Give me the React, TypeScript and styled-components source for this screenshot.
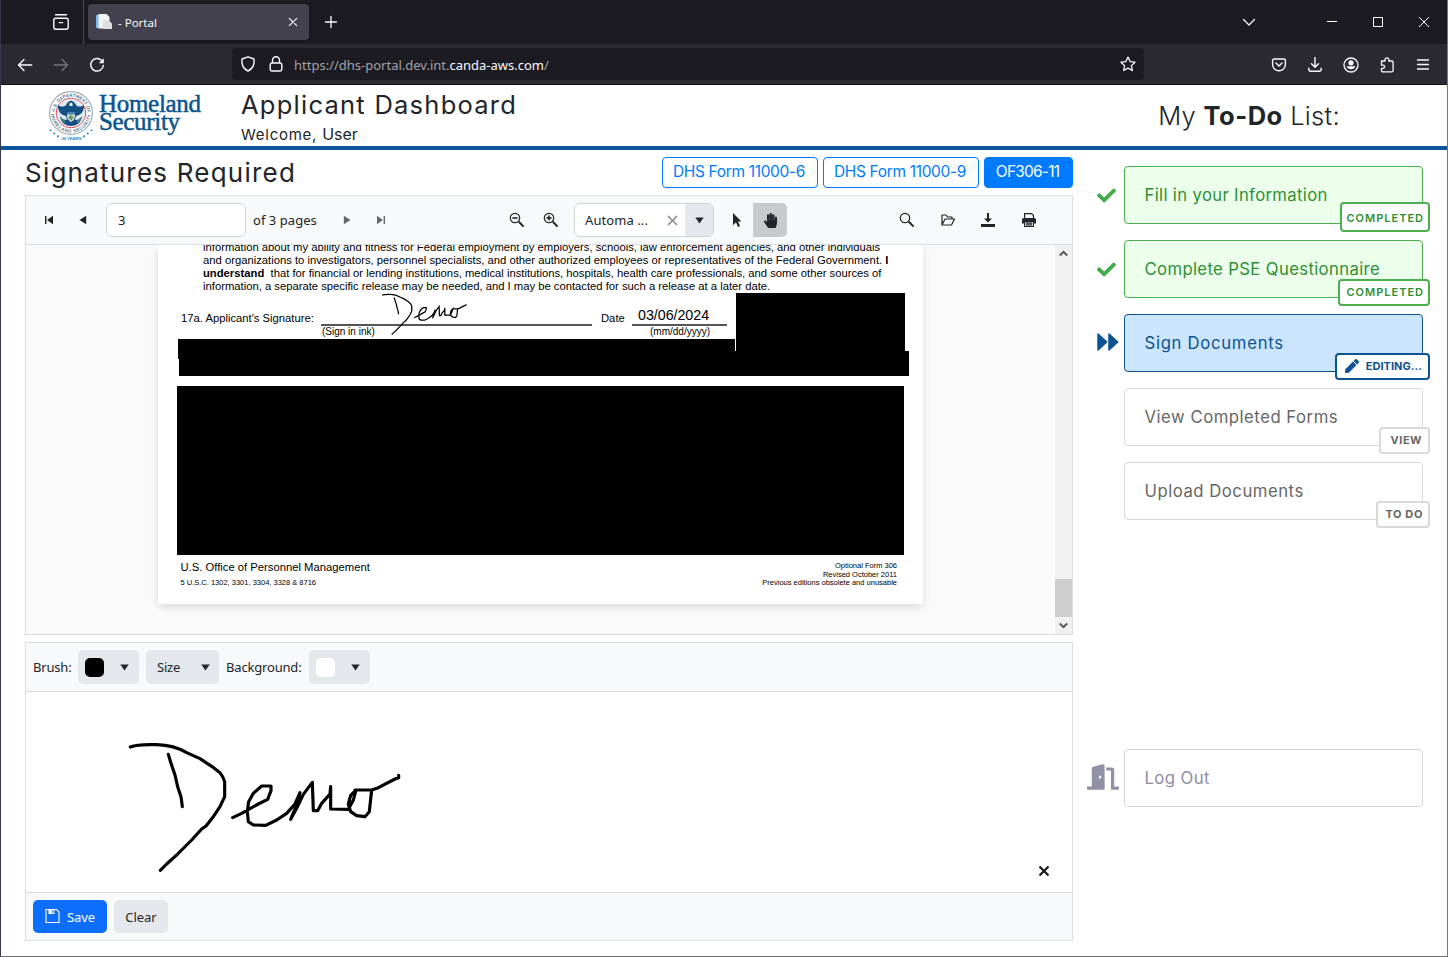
import React from "react";
import styled, { createGlobalStyle, css } from "styled-components";
import { FaCheck, FaDoorOpen, FaPen, FaHandPaper } from "react-icons/fa";

const GlobalStyle = createGlobalStyle`
  * { box-sizing: border-box; }
  body { margin: 0; background: #fff; }
  svg { display: block; flex: none; }
`;

const display = `"Inter", "Liberation Sans", sans-serif`;
const ui = `"Noto Sans", "Open Sans", sans-serif`;

/* ---------- browser window ---------- */

const Window = styled.div`
  width: 1448px;
  height: 957px;
  display: flex;
  flex-direction: column;
  overflow: hidden;
  border-left: 1px solid #35384c;
  border-right: 1px solid #777;
  border-bottom: 1px solid #6d6d70;
  background: #fff;
  color: #212529;
  font-family: ${ui};
  font-size: 13px;
`;

const TabStrip = styled.div`
  flex: none;
  height: 44px;
  display: flex;
  align-items: center;
  background: #1c1b22;
  color: #fbfbfe;
`;

const StripIcon = styled.div<{ $w: number }>`
  width: ${(p) => p.$w}px;
  height: 44px;
  display: flex;
  align-items: center;
  justify-content: center;
`;

const ArchiveCell = styled(StripIcon)`
  margin-left: 37px;
  border-right: 1px solid #4b4a54;
`;

const Tab = styled.div`
  width: 221px;
  height: 36px;
  margin-left: 4px;
  padding: 0 8px;
  display: flex;
  align-items: center;
  border-radius: 4px;
  background: #42414d;
  box-shadow: 0 0 3px rgba(0, 0, 0, 0.4);
  font-size: 11.5px;
`;

const TabTitle = styled.span`
  flex: 1;
  margin-left: 6px;
`;

const WindowButtons = styled.div`
  margin-left: auto;
  display: flex;
`;

const NavBar = styled.div`
  flex: none;
  height: 41px;
  padding-left: 6px;
  display: flex;
  align-items: center;
  background: #2b2a33;
  border-bottom: 1px solid #0c0c0d;
  color: #fbfbfe;
`;

const NavCell = styled.div<{ $dim?: boolean }>`
  width: 36px;
  height: 40px;
  padding-top: 1px;
  display: flex;
  align-items: center;
  justify-content: center;
  color: ${(p) => (p.$dim ? "#75747d" : "inherit")};
`;

const UrlBar = styled.div`
  width: 912px;
  height: 32px;
  margin-left: 117px;
  padding: 0 8px;
  display: flex;
  align-items: center;
  border-radius: 4px;
  background: #1c1b22;
`;

const LockSlot = styled.div`
  margin: 0 10px 0 12px;
`;

const Url = styled.span`
  flex: 1;
  color: #a3a2a9;
  font-size: 13px;
  line-height: 20px;
  padding-top: 1px;
  b { font-weight: 400; color: #fbfbfe; }
`;

const NavIcons = styled.div`
  margin-left: 117px;
  display: flex;
`;

/* ---------- page header ---------- */

const Header = styled.header`
  flex: none;
  height: 65px;
  display: flex;
  border-bottom: 4px solid #0b5499;
`;

const Logo = styled.svg`
  margin-left: 44px;
`;

const Titles = styled.div`
  margin-left: 31px;
  padding-top: 5px;
  font-family: ${display};
`;

const PageTitle = styled.h1`
  margin: 0;
  font-size: 25.5px;
  font-weight: 370;
  line-height: 30px;
  letter-spacing: 1.25px;
`;

const Welcome = styled.div`
  margin-top: 4px;
  font-size: 15px;
  line-height: 20px;
  letter-spacing: 0.75px;
  span { font-size: 16px; letter-spacing: 0; }
`;

const TodoTitle = styled.h2`
  margin: 16px 107px 0 auto;
  font-family: ${display};
  font-size: 25.5px;
  font-weight: 350;
  line-height: 30px;
  letter-spacing: 0.3px;
  b { font-weight: 700; letter-spacing: 0.5px; }
`;

/* ---------- body ---------- */

const Body = styled.div`
  flex: 1;
  display: flex;
  padding: 7px 0 0 24px;
`;

const Main = styled.main`
  width: 1048px;
`;

const FormBar = styled.div`
  height: 38px;
  display: flex;
  gap: 5px;
  font-family: ${display};
`;

const SectionTitle = styled.h2`
  margin: 0 auto 0 0;
  font-size: 26px;
  font-weight: 380;
  line-height: 31px;
  letter-spacing: 1.22px;
`;

const FormButton = styled.button<{ $active?: boolean; $w: number }>`
  width: ${(p) => p.$w}px;
  height: 31px;
  padding: 0 2px 2px 0;
  border: 1px solid #007bff;
  border-radius: 4px;
  background: ${(p) => (p.$active ? "#007bff" : "#fff")};
  color: ${(p) => (p.$active ? "#fff" : "#007bff")};
  font-family: ${display};
  font-size: 15.5px;
  letter-spacing: ${(p) => (p.$active ? "-0.8px" : "-0.34px")};
`;

const Panel = styled.section<{ $h: number }>`
  height: ${(p) => p.$h}px;
  margin-bottom: 7px;
  display: flex;
  flex-direction: column;
  border: 1px solid #dadde1;
  background: #fff;
`;

const Toolbar = styled.div<{ $edge?: "top" }>`
  flex: none;
  height: ${(p) => (p.$edge ? 48 : 49)}px;
  display: flex;
  align-items: center;
  gap: 7px;
  padding: 0 7px;
  background: #f8f9fb;
  ${(p) => (p.$edge ? "border-top" : "border-bottom")}: 1px solid #dadde1;
`;

const ViewerToolbar = styled(Toolbar)`
  gap: 0;
  padding: 0 26.5px 0 6px;
`;

const IconButton = styled.button<{ $on?: boolean; $dim?: boolean }>`
  width: 34px;
  height: 34px;
  padding: 0;
  display: flex;
  align-items: center;
  justify-content: center;
  border: 0;
  border-radius: ${(p) => (p.$on ? "0 5px 5px 0" : "0")};
  background: ${(p) => (p.$on ? "#c9cacc" : "transparent")};
  color: ${(p) => (p.$dim ? "#66696c" : "#212529")};
`;

const PageInput = styled.div`
  width: 140px;
  height: 34px;
  margin: 0 7px 0 6px;
  padding: 0 11px;
  border: 1px solid #ced4da;
  border-radius: 6px;
  background: #fff;
  line-height: 32px;
`;

const PageCount = styled.span`
  width: 77px;
  letter-spacing: 0.05px;
`;

const ZoomGroup = styled.div`
  margin-left: 102px;
  display: flex;
`;

const Combo = styled.div`
  width: 140px;
  height: 34px;
  margin: 0 5px 0 6px;
  display: flex;
  align-items: center;
  border: 1px solid #ced4da;
  border-radius: 6px;
  background: #fff;
  overflow: hidden;
  padding-left: 10px;
`;

const ComboText = styled.span`
  flex: 1;
  letter-spacing: 0.08px;
`;

const ComboArrow = styled.div`
  width: 28px;
  height: 34px;
  margin-left: 7px;
  padding-left: 1px;
  display: flex;
  align-items: center;
  justify-content: center;
  background: #e4e7eb;
`;

const FileActions = styled.div`
  margin-left: auto;
  display: flex;
  gap: 6.5px;
`;

/* ---------- document ---------- */

const Viewer = styled.div`
  flex: 1;
  display: flex;
  background: #fafafa;
  overflow: hidden;
`;

const Sheet = styled.article`
  position: relative;
  width: 765px;
  height: 359px;
  margin-left: 132px;
  padding-bottom: 16px;
  display: flex;
  flex-direction: column;
  background: #fff;
  box-shadow: 0 3px 8px rgba(0, 0, 0, 0.13);
  color: #000;
  font-family: "Liberation Sans", Arial, sans-serif;
  font-size: 11.25px;
  line-height: 13px;
`;

const Paragraph = styled.p`
  margin: -4px 0 0 45px;
  white-space: pre;
`;

const SignRow = styled.div`
  display: flex;
  padding-left: 23px;
`;

const SignLabel = styled.span<{ $w: number }>`
  width: ${(p) => p.$w}px;
  padding-top: 19px;
`;

const SignField = styled.div<{ $w: number }>`
  width: ${(p) => p.$w}px;
  margin-right: 9px;
`;

const DateField = styled(SignField)`
  margin-left: 3px;
`;

const SignValue = styled.div`
  height: 33px;
  padding: 14px 0 0 6px;
  border-bottom: 2px solid #555;
  font-size: 14.3px;
  line-height: 17px;
  letter-spacing: -0.05px;
`;

const SignHint = styled.div<{ $indent: number }>`
  padding-left: ${(p) => p.$indent}px;
  font-size: 10px;
  line-height: 12px;
`;

const Ink = styled.svg`
  position: absolute;
  left: 0;
  top: 0;
`;

const Redaction = styled.div<{ $x: number; $y: number; $w: number; $h: number }>`
  position: absolute;
  left: ${(p) => p.$x}px;
  top: ${(p) => p.$y}px;
  width: ${(p) => p.$w}px;
  height: ${(p) => p.$h}px;
  background: #000;
`;

const SheetFooter = styled.footer`
  margin-top: auto;
  padding: 0 26px 0 22.5px;
  display: flex;
  justify-content: space-between;
  align-items: flex-end;
  font-size: 7.5px;
  line-height: 8.6px;
`;

const Agency = styled.div`
  margin-bottom: 5px;
  font-size: 11.25px;
  line-height: 14px;
`;

const Edition = styled.div`
  text-align: right;
`;

const ScrollBar = styled.div`
  width: 17px;
  margin-left: auto;
  display: flex;
  flex-direction: column;
  align-items: center;
  background: #f0f0f0;
`;

const ScrollArrow = styled.div`
  height: 17px;
  display: flex;
  align-items: center;
  color: #555;
`;

const ScrollThumb = styled.div`
  width: 17px;
  height: 38px;
  margin-top: auto;
  background: #cdcdcd;
`;

/* ---------- signature pad ---------- */

const DropButton = styled.button<{ $w: number }>`
  width: ${(p) => p.$w}px;
  height: 34px;
  padding: 0 ${(p) => (p.$w > 70 ? 9 : 10)}px 0 ${(p) => (p.$w > 70 ? 11 : 7)}px;
  display: flex;
  align-items: center;
  justify-content: space-between;
  border: 0;
  border-radius: 5px;
  background: #e4e7eb;
  color: #212529;
  font: 13px ${ui};
  letter-spacing: -0.2px;
`;

const ToolLabel = styled.span<{ $w: number }>`
  width: ${(p) => p.$w}px;
  letter-spacing: -0.18px;
  white-space: nowrap;
`;

const Swatch = styled.span<{ $color: string }>`
  width: 19px;
  height: 19px;
  border-radius: 5px;
  background: ${(p) => p.$color};
`;

const Pad = styled.div`
  flex: 1;
  display: flex;
  justify-content: space-between;
  align-items: flex-end;
  padding-right: 22px;
`;

const PadClose = styled.div`
  margin-bottom: 15px;
`;

const ActionButton = styled.button<{ $primary?: boolean; $w: number }>`
  width: ${(p) => p.$w}px;
  height: 33px;
  padding: 0;
  display: flex;
  align-items: center;
  justify-content: center;
  gap: 7px;
  border: 0;
  border-radius: 5px;
  background: ${(p) => (p.$primary ? "#0d6efd" : "#e4e7eb")};
  color: ${(p) => (p.$primary ? "#fff" : "#212529")};
  font: 13px ${ui};
  letter-spacing: -0.05px;
`;

/* ---------- to-do list ---------- */

const Todo = styled.aside`
  width: 337px;
  margin-left: 13px;
  padding-top: 9px;
  display: flex;
  flex-direction: column;
  gap: 16px;
`;

type Tone = "done" | "current" | "idle" | "exit";
const tones: Record<Tone, { line: string; bg: string; text: string; icon: string; nudge: string }> = {
  done: { line: "#4caf50", bg: "#ebffeb", text: "#2f8f36", icon: "#42ab4b", nudge: "1px 0 0 3px" },
  current: { line: "#0b5394", bg: "#cce5ff", text: "#0b5394", icon: "#0b5394", nudge: "0 0 2px 5px" },
  idle: { line: "#d9d9db", bg: "#fff", text: "#666", icon: "#666", nudge: "0" },
  exit: { line: "#d5d5dc", bg: "#fff", text: "#8f8da3", icon: "#9290a6", nudge: "0 4px 3px 0" },
};

const TodoRow = styled.div<{ $tone: Tone }>`
  height: 58px;
  display: flex;
  align-items: center;
  color: ${(p) => tones[p.$tone].icon};
  ${(p) => p.$tone === "exit" && css`margin-top: 213px;`}
`;

const TodoIcon = styled.div<{ $tone: Tone }>`
  width: 38px;
  display: flex;
  justify-content: center;
  padding: ${(p) => tones[p.$tone].nudge};
`;

const Card = styled.div<{ $tone: Tone; $ls: number }>`
  position: relative;
  width: 299px;
  height: 58px;
  padding-left: 19.5px;
  border: 1px solid ${(p) => tones[p.$tone].line};
  border-radius: 4px;
  background: ${(p) => tones[p.$tone].bg};
  color: ${(p) => tones[p.$tone].text};
  font-family: ${display};
  font-size: 16.7px;
  font-weight: 380;
  line-height: 57px;
  letter-spacing: ${(p) => p.$ls}px;
`;

const Badge = styled.span<{ $tone: Tone; $w: number; $h: number; $ls: number; $pad: string }>`
  position: absolute;
  right: -8px;
  bottom: -9px;
  width: ${(p) => p.$w}px;
  height: ${(p) => p.$h}px;
  padding: ${(p) => p.$pad};
  display: flex;
  align-items: center;
  justify-content: flex-end;
  gap: 7px;
  border: 2px solid ${(p) => tones[p.$tone].line};
  border-radius: 4px;
  background: #fff;
  font-size: 11px;
  font-weight: ${(p) => (p.$tone === "done" ? 600 : 700)};
  line-height: 14px;
  letter-spacing: ${(p) => p.$ls}px;
`;

const LeftArrow = ({ bar = false, flip = false }) => (
  <svg width="10" height="10" viewBox="0 0 10 10" fill="currentColor" transform={flip ? "scale(-1 1)" : undefined}>
    <path d={bar ? "M9 .8v8.4L3 5z" : "M8.2.8v8.4L1.5 5z"} />
    {bar && <path d="M1 1h1.4v8H1z" />}
  </svg>
);

const Caret = () => (
  <svg width="9" height="7" viewBox="0 0 9 7" fill="#212529"><path d="M.3.5h8.4L4.5 6.6z" /></svg>
);

const Magnifier = ({ mark }: { mark?: "minus" | "plus" }) => (
  <svg width="16" height="16" viewBox="0 0 16 16" fill="none" stroke="currentColor" strokeWidth="1.2">
    <circle cx="6" cy="6" r="4.7" />
    <path d="M9.8 9.8l4.8 4.8" strokeWidth="2" />
    {mark && <path d="M3.4 6h5.2" strokeWidth="1.6" />}
    {mark === "plus" && <path d="M6 3.4v5.2" strokeWidth="1.6" />}
  </svg>
);

const Line = ({ d, size = 16, w = 1.3 }: { d: string; size?: number; w?: number }) => (
  <svg width={size} height={size} viewBox="0 0 16 16" fill="none" stroke="currentColor" strokeWidth={w} strokeLinecap="round" strokeLinejoin="round">
    <path d={d} />
  </svg>
);

const Signature = () => (
  <>
    <path d="M331 321C350 313 380 313 410 314C440 315 470 320 500 338L540 356L575 379L600 398Q610 410 614 425V470L600 500L580 530L558 558L545 567L515 600L485 630L472 643L440 672L421 691" />
    <path d="M445 343L453 370L465 405L473 440L483 470L487 500" />
    <path d="M638 533L665 520L715 492L743 478L753 452V438H725L700 460L686 485L682 515L685 545L700 555L737 556L770 540L800 520L825 492L840 458L832 490L812 538L830 505L850 463L877 427L880 512H893L905 490L930 462L932 440V507L985 508L1000 480L1008 450L992 466L985 492L992 515L1010 527L1035 530L1048 515L1055 450H1005M1055 450L1075 443L1125 417L1136 413V406" />
  </>
);

const Seal = () => (
  <g>
    <circle cx="26" cy="28" r="21.4" fill="#fff" stroke="#a3adb5" strokeWidth="1.2" />
    <path id="sealTop" d="M9.8 28a16.2 16.2 0 0 1 32.4 0" fill="none" />
    <path id="sealBottom" d="M6.3 28a19.7 19.7 0 0 0 39.4 0" fill="none" />
    <g fontFamily="Liberation Sans, sans-serif" fontSize="4.5" fontWeight="700" fill="#4f7896">
      <text textLength="49"><textPath href="#sealTop" startOffset="1">U.S. DEPARTMENT OF</textPath></text>
      <text textLength="59"><textPath href="#sealBottom" startOffset="1">HOMELAND SECURITY</textPath></text>
    </g>
    <circle cx="26" cy="28" r="14.8" fill="#fff" stroke="#d04a55" strokeWidth="1" />
    <circle cx="26" cy="28" r="13.5" fill="#dfe9f1" />
    <path d="M13 20c3 2 6 2 8 0l2-3 3-1.5 3 1.5 2 3c2 2 5 2 8 0 .5 6-3 10-8 11l-1 4c3 0 5-1 7-3-1 5-5 9-11 9s-10-4-11-9c2 2 4 3 7 3l-1-4c-5-1-8.5-5-8-11z" fill="#144f84" />
    <path d="M22 27h8v4c0 3-2 5-4 6-2-1-4-3-4-6z" fill="#dfeaf0" />
    <path d="M22 27h8v2.6h-8z" fill="#4b87b0" />
    <path d="M23 32l3-2 3 2-3 4z" fill="#6a9b62" />
    <path d="M24.5 18.5l1.5-1 1.5 1V21h-3z" fill="#fff" />
    <path d="M15 32l5 5M37 32l-5 5" stroke="#5c8f86" strokeWidth="1.6" />
    <g fill="#2b8cc0">
      <circle cx="5.5" cy="45.3" r="1" /><circle cx="9.3" cy="48.5" r="1.1" /><circle cx="13" cy="51.3" r="1.1" />
      <circle cx="46.5" cy="45.3" r="1" /><circle cx="42.7" cy="48.5" r="1.1" /><circle cx="39" cy="51.3" r="1.1" />
      <text x="16.5" y="55.3" fontSize="4.4" fontWeight="700" fontFamily="Liberation Sans, sans-serif" textLength="20">20 YEARS</text>
    </g>
  </g>
);

const items: { tone: Tone; label: string; ls: number; badge: string; w: number; h: number; bls: number; pad: string }[] = [
  { tone: "done", label: "Fill in your Information", ls: 0.34, badge: "COMPLETED", w: 90, h: 30, bls: 1, pad: "1px 4px 0 0" },
  { tone: "done", label: "Complete PSE Questionnaire", ls: 0.36, badge: "COMPLETED", w: 92, h: 27, bls: 1, pad: "0 4px 1px 0" },
  { tone: "current", label: "Sign Documents", ls: 0.71, badge: "EDITING...", w: 95, h: 27, bls: 0.05, pad: "0 6px 2px 0" },
  { tone: "idle", label: "View Completed Forms", ls: 0.52, badge: "VIEW", w: 51, h: 27, bls: 0.5, pad: "0 6px 2px 0" },
  { tone: "idle", label: "Upload Documents", ls: 0.52, badge: "TO DO", w: 54, h: 27, bls: 0.6, pad: "0 5px 2px 0" },
];

export default function App() {
  return (
    <Window>
      <GlobalStyle />
      <TabStrip>
        <ArchiveCell $w={46}>
          <svg width="18" height="18" viewBox="0 0 18 18" fill="none" stroke="currentColor" strokeWidth="1.4" strokeLinecap="round">
            <path d="M3.5 1.7h11M1.8 7.2c0-1.2.8-2 2-2h10.4c1.2 0 2 .8 2 2v7c0 1.2-.8 2-2 2H3.8c-1.2 0-2-.8-2-2zM7.3 9.6h3.4" />
          </svg>
        </ArchiveCell>
        <Tab>
          <svg width="16" height="16" viewBox="0 0 16 16">
            <path d="M0 1h6v13H0z" fill="#7db8e8" />
            <path d="M2.5 0h8l3 3v11.5h-11z" fill="#f4f4f6" />
            <path d="M7 6h5l4 3.5V15H7z" fill="#dedee2" />
          </svg>
          <TabTitle>- Portal</TabTitle>
          <Line d="M4.3 4.3l7.4 7.4M11.7 4.3l-7.4 7.4" w={1.1} />
        </Tab>
        <StripIcon $w={43}><Line d="M8 2.5v11M2.5 8h11" /></StripIcon>
        <WindowButtons>
          <StripIcon $w={120}><Line d="M2.5 5.5L8 11l5.5-5.5" /></StripIcon>
          <StripIcon $w={46}><svg width="10" height="10" stroke="#fff"><path d="M0 4.5h10" /></svg></StripIcon>
          <StripIcon $w={46}><svg width="10" height="10" stroke="#fff" fill="none"><path d="M.5.5h9v9h-9z" /></svg></StripIcon>
          <StripIcon $w={46}><svg width="10" height="10" stroke="#fff"><path d="M0 0l10 10M10 0L0 10" /></svg></StripIcon>
        </WindowButtons>
      </TabStrip>
      <NavBar>
        <NavCell><Line d="M14.7 8H1.5M7 2.5L1.5 8 7 13.5" w={1.4} /></NavCell>
        <NavCell $dim><Line d="M1.3 8h13.2M9 2.5L14.5 8 9 13.5" w={1.4} /></NavCell>
        <NavCell>
          <svg width="16" height="16" viewBox="0 0 16 16" fill="none" stroke="currentColor" strokeWidth="1.5" strokeLinecap="round">
            <path d="M12.5 3.3A6.3 6.3 0 1 0 14.3 8.5" /><path d="M14.8 1.2v5H9.8z" fill="currentColor" stroke="none" />
          </svg>
        </NavCell>
        <UrlBar>
          <Line d="M8 .8l6 2.2c.6 4.5-.5 9.3-6 12C2.5 12.3 1.4 7.5 2 3z" w={1.4} />
          <LockSlot><Line d="M4.5 7V4.3a3.5 3.5 0 0 1 7 0V7M4 7h8c1 0 1.8.7 1.8 1.7v4.6c0 1-.8 1.7-1.8 1.7H4c-1 0-1.8-.7-1.8-1.7V8.7C2.2 7.7 3 7 4 7z" w={1.4} /></LockSlot>
          <Url>https://dhs-portal.dev.int.<b>canda-aws.com</b>/</Url>
          <Line d="M8 1.1l2.1 4.5 4.9.6-3.6 3.4.9 4.9L8 12.1l-4.3 2.4.9-4.9L1 6.2l4.9-.6z" w={1.3} />
        </UrlBar>
        <NavIcons>
          <NavCell><Line d="M3.2 2h9.600c1 0 1.600.6 1.600 1.600V7.5a6.400 6.200 0 0 1-12.800 0V3.600C1.600 2.600 2.200 2 3.200 2zM5 6L8 9l3-3" w={1.4} /></NavCell>
          <NavCell><Line d="M8 .5v9.500M4.500 6.700L8 10.200 11.500 6.700M1.800 11.300v1c0 1.200.8 2 2 2h8.400c1.200 0 2-.8 2-2v-1" w={1.4} /></NavCell>
          <NavCell>
            <svg width="16" height="16" viewBox="0 0 16 16"><circle cx="8" cy="8" r="7" fill="none" stroke="currentColor" strokeWidth="1.3" /><circle cx="8" cy="5.8" r="2.6" fill="currentColor" /><path d="M3.5 9.3h9a4.9 4.9 0 0 1-9 0z" fill="currentColor" /></svg>
          </NavCell>
          <NavCell><Line d="M6 4V2.700a1.900 1.900 0 0 1 3.800 0V4H12.700c.9 0 1.400.5 1.400 1.400v8c0 .9-.5 1.400-1.400 1.400H4c-1 0-1.500-.5-1.500-1.400V11.300H4a1.500 1.500 0 0 0 0-3.200H2.500V4z" /></NavCell>
          <NavCell><Line d="M2.5 3h11M2.5 7.5h11M2.5 12h11" w={1.3} /></NavCell>
        </NavIcons>
      </NavBar>

      <Header>
        <Logo width="165" height="60" viewBox="0 0 165 60">
          <Seal />
          <g fontFamily="Liberation Serif, serif" fontSize="25" fill="#0a5590" stroke="#0a5590" strokeWidth="0.5">
            <text x="54" y="26.8" textLength="102">Homeland</text>
            <text x="54" y="45" textLength="81">Security</text>
          </g>
        </Logo>
        <Titles>
          <PageTitle>Applicant Dashboard</PageTitle>
          <Welcome>Welcome, <span>User</span></Welcome>
        </Titles>
        <TodoTitle>My <b>To-Do</b> List:</TodoTitle>
      </Header>

      <Body>
        <Main>
          <FormBar>
            <SectionTitle>Signatures Required</SectionTitle>
            <FormButton $w={156}>DHS Form 11000-6</FormButton>
            <FormButton $w={156}>DHS Form 11000-9</FormButton>
            <FormButton $w={89} $active>OF306-11</FormButton>
          </FormBar>

          <Panel $h={440}>
            <ViewerToolbar>
              <IconButton><LeftArrow bar /></IconButton>
              <IconButton><LeftArrow /></IconButton>
              <PageInput>3</PageInput>
              <PageCount>of 3 pages</PageCount>
              <IconButton $dim><LeftArrow flip /></IconButton>
              <IconButton $dim><LeftArrow bar flip /></IconButton>
              <ZoomGroup>
                <IconButton><Magnifier mark="minus" /></IconButton>
                <IconButton><Magnifier mark="plus" /></IconButton>
                <Combo>
                  <ComboText>Automa ...</ComboText>
                  <svg width="11" height="11" stroke="#8b8e91" strokeWidth="1.7"><path d="M1 1l9 9M10 1l-9 9" /></svg>
                  <ComboArrow><Caret /></ComboArrow>
                </Combo>
                <IconButton>
                  <svg width="12" height="16" viewBox="0 0 12 16" fill="currentColor"><path d="M3 1l8.500 8.500H8l2 4.600-2 .9-2-4.700-3 2.900z" /></svg>
                </IconButton>
                <IconButton $on><FaHandPaper size={15} /></IconButton>
              </ZoomGroup>
              <FileActions>
                <IconButton><Magnifier /></IconButton>
                <IconButton><Line d="M2 13V3h4l1.5 2H12v2M2 13l3-6h9.500l-3 6z" w={1.2} /></IconButton>
                <IconButton>
                  <svg width="16" height="16" viewBox="0 0 16 16" fill="currentColor"><path d="M7 1h2v5.500h3L8 10.500 4 6.500h3zM1 12h14v3H1z" /></svg>
                </IconButton>
                <IconButton>
                  <svg width="16" height="16" viewBox="0 0 16 16" fill="none" stroke="currentColor" strokeWidth="1.2">
                    <path d="M3.6 6V1.600h6.900l2 2V6" /><path d="M1 8c0-1.300.7-2 2-2h10c1.300 0 2 .7 2 2v3.500H1z" fill="currentColor" stroke="none" /><path d="M3.6 9.600h8.800v4.900H3.600z" fill="#f8f9fb" /><path d="M5 11.200h6M5 12.900h6" />
                  </svg>
                </IconButton>
              </FileActions>
            </ViewerToolbar>
            <Viewer>
              <Sheet>
                <Paragraph>
                  {"information about my ability and fitness for Federal employment by employers, schools, law enforcement agencies, and other individuals\nand organizations to investigators, personnel specialists, and other authorized employees or representatives of the Federal Government. "}<b>I</b>
                  {"\n"}<b>understand</b>{"  that for financial or lending institutions, medical institutions, hospitals, health care professionals, and some other sources of\ninformation, a separate specific release may be needed, and I may be contacted for such a release at a later date."}
                </Paragraph>
                <SignRow>
                  <SignLabel $w={140}>17a. Applicant's Signature:</SignLabel>
                  <SignField $w={271}>
                    <SignValue />
                    <SignHint $indent={1}>(Sign in ink)</SignHint>
                  </SignField>
                  <SignLabel $w={28}>Date</SignLabel>
                  <DateField $w={95}>
                    <SignValue>03/06/2024</SignValue>
                    <SignHint $indent={18}>(mm/dd/yyyy)</SignHint>
                  </DateField>
                </SignRow>
                <Ink width="765" height="120" fill="none" stroke="#000" strokeWidth="12">
                  <g transform="translate(189.900 15.900) scale(.104 .1067)"><Signature /></g>
                </Ink>
                <Redaction $x={578} $y={48} $w={169} $h={59} />
                <Redaction $x={20} $y={94} $w={557} $h={20} />
                <Redaction $x={21} $y={106} $w={730} $h={25} />
                <Redaction $x={19} $y={141} $w={727} $h={169} />
                <SheetFooter>
                  <div>
                    <Agency>U.S. Office of Personnel Management</Agency>
                    5 U.S.C. 1302, 3301, 3304, 3328 &amp; 8716
                  </div>
                  <Edition>
                    Optional Form 306<br />Revised October 2011<br />Previous editions obsolete and unusable
                  </Edition>
                </SheetFooter>
              </Sheet>
              <ScrollBar>
                <ScrollArrow><svg width="9" height="7" fill="none" stroke="currentColor" strokeWidth="2"><path d="M.8 5.500L4.500 1.800l3.700 3.700" /></svg></ScrollArrow>
                <ScrollThumb />
                <ScrollArrow><svg width="9" height="7" fill="none" stroke="currentColor" strokeWidth="2"><path d="M.8 1.500l3.700 3.700 3.700-3.700" /></svg></ScrollArrow>
              </ScrollBar>
            </Viewer>
          </Panel>

          <Panel $h={299}>
            <Toolbar>
              <ToolLabel $w={38}>Brush:</ToolLabel>
              <DropButton $w={61}><Swatch $color="#000" /><Caret /></DropButton>
              <DropButton $w={73}>Size<Caret /></DropButton>
              <ToolLabel $w={76}>Background:</ToolLabel>
              <DropButton $w={61}><Swatch $color="#fff" /><Caret /></DropButton>
            </Toolbar>
            <Pad>
              <svg width="500" height="200" fill="none" stroke="#000" strokeWidth="9.5" strokeLinejoin="round" strokeLinecap="round">
                <g transform="translate(-6 -52) scale(.33333)"><Signature /></g>
              </svg>
              <PadClose><svg width="12" height="12" stroke="#16181b" strokeWidth="2.2"><path d="M1.500 1.500l9 9M10.500 1.500l-9 9" /></svg></PadClose>
            </Pad>
            <Toolbar $edge="top">
              <ActionButton $w={74} $primary>
                <svg width="15" height="15" viewBox="0 0 15 15" fill="none" stroke="currentColor" strokeWidth="1.1">
                  <path d="M1 .5h10.500L14 3v10.500H1z" /><path d="M3.500.5h6V5h-6z" fill="currentColor" stroke="none" /><path d="M7.300 1.200h1.300V4H7.300z" fill="#0d6efd" stroke="none" />
                </svg>
                Save
              </ActionButton>
              <ActionButton $w={54}>Clear</ActionButton>
            </Toolbar>
          </Panel>
        </Main>

        <Todo>
          {items.map((it) => (
            <TodoRow key={it.label} $tone={it.tone}>
              <TodoIcon $tone={it.tone}>
                {it.tone === "done" && <FaCheck size={19} />}
                {it.tone === "current" && (
                  <svg width="22" height="18" viewBox="0 0 22 18" fill="currentColor" stroke="currentColor" strokeWidth="1.5" strokeLinejoin="round">
                    <path d="M1 1v16l8.700-8zM12 1v16l8.700-8z" />
                  </svg>
                )}
              </TodoIcon>
              <Card $tone={it.tone} $ls={it.ls}>
                {it.label}
                <Badge $tone={it.tone} $w={it.w} $h={it.h} $ls={it.bls} $pad={it.pad}>
                  {it.tone === "current" && <FaPen size={14} />}
                  {it.badge}
                </Badge>
              </Card>
            </TodoRow>
          ))}
          <TodoRow $tone="exit">
            <TodoIcon $tone="exit"><FaDoorOpen size={32} /></TodoIcon>
            <Card $tone="exit" $ls={0.42}>Log Out</Card>
          </TodoRow>
        </Todo>
      </Body>
    </Window>
  );
}
